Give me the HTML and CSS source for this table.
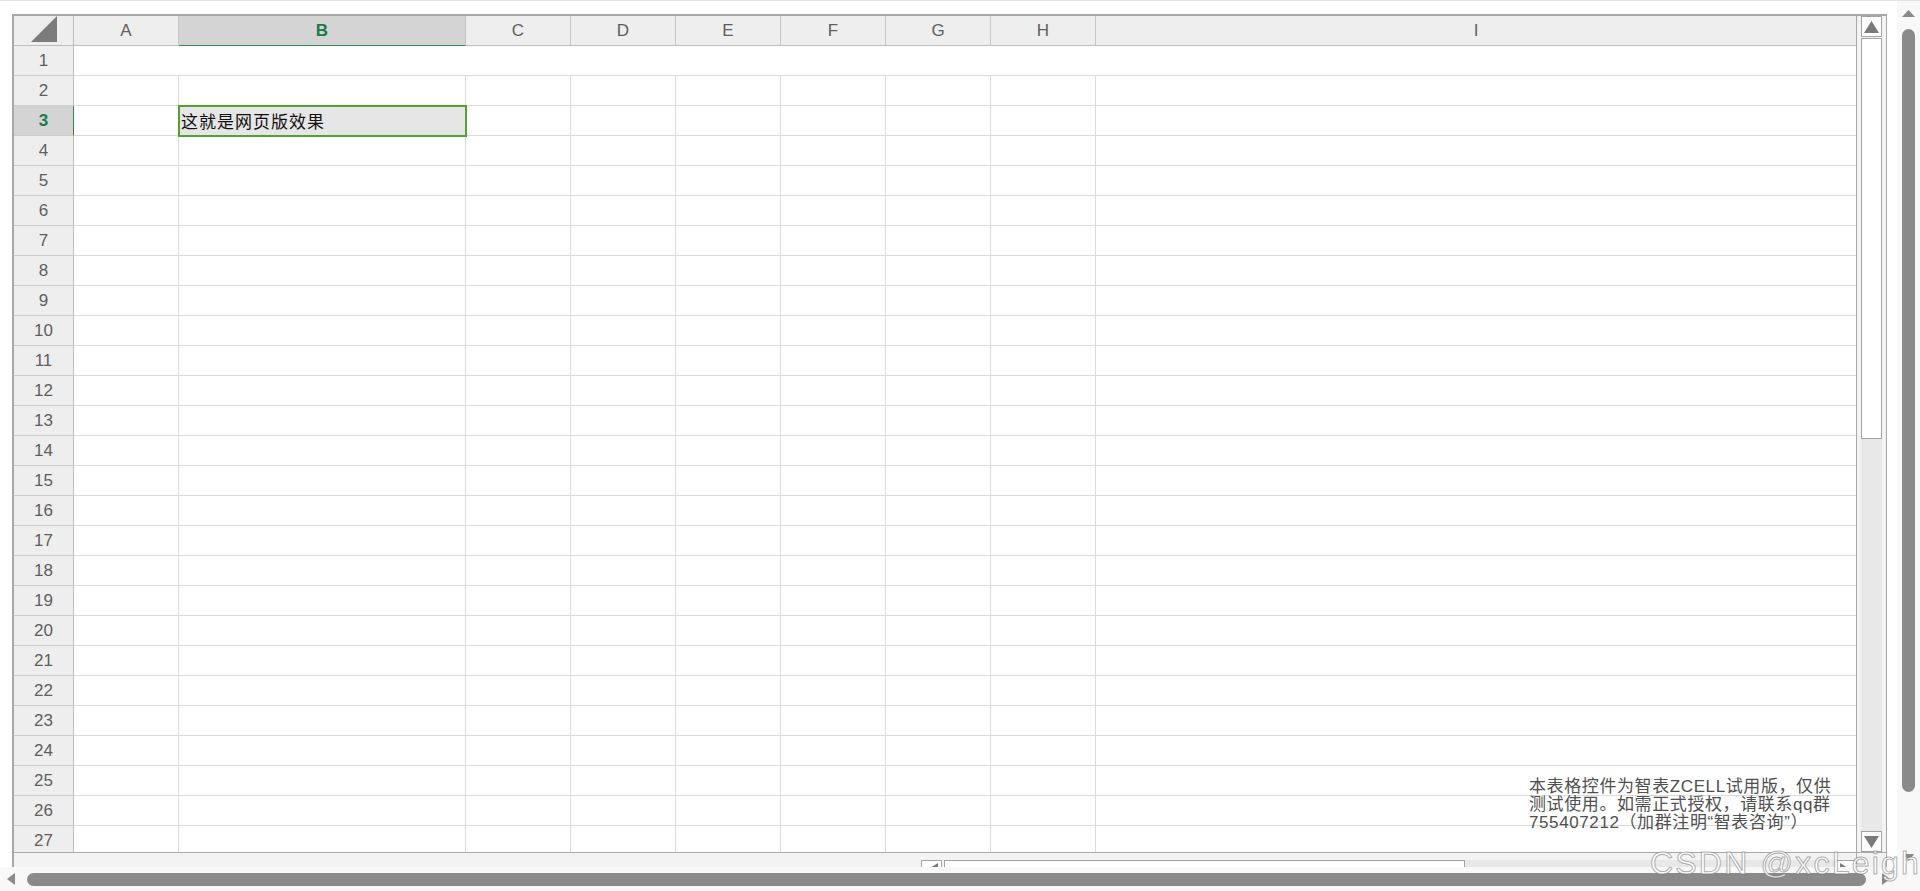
FILE: index.html
```html
<!DOCTYPE html>
<html lang="zh-CN">
<head>
<meta charset="utf-8">
<title>ZCELL</title>
<link rel="stylesheet" href="styles.css">
</head>
<body>
<div class="screen">
  <div class="doc">
    <div class="sheet">
      <div class="grid">
        <div class="r hdr">
          <div class="corner"><svg width="26" height="26" viewBox="0 0 26 26"><polygon points="0,26 26,26 26,0" fill="#7b7b7b"/></svg></div>
          <div class="ch">A</div><div class="ch on">B</div><div class="ch">C</div><div class="ch">D</div><div class="ch">E</div><div class="ch">F</div><div class="ch">G</div><div class="ch">H</div><div class="ch">I</div>
        </div>
        <div class="r"><div class="rh">1</div><div class="c span"></div></div>
        <div class="r"><div class="rh">2</div><div class="c"></div><div class="c"></div><div class="c"></div><div class="c"></div><div class="c"></div><div class="c"></div><div class="c"></div><div class="c"></div><div class="c"></div></div>
        <div class="r"><div class="rh on">3</div><div class="c"></div><div class="c sel">这就是网页版效果</div><div class="c"></div><div class="c"></div><div class="c"></div><div class="c"></div><div class="c"></div><div class="c"></div><div class="c"></div></div>
        <div class="r"><div class="rh">4</div><div class="c"></div><div class="c"></div><div class="c"></div><div class="c"></div><div class="c"></div><div class="c"></div><div class="c"></div><div class="c"></div><div class="c"></div></div>
        <div class="r"><div class="rh">5</div><div class="c"></div><div class="c"></div><div class="c"></div><div class="c"></div><div class="c"></div><div class="c"></div><div class="c"></div><div class="c"></div><div class="c"></div></div>
        <div class="r"><div class="rh">6</div><div class="c"></div><div class="c"></div><div class="c"></div><div class="c"></div><div class="c"></div><div class="c"></div><div class="c"></div><div class="c"></div><div class="c"></div></div>
        <div class="r"><div class="rh">7</div><div class="c"></div><div class="c"></div><div class="c"></div><div class="c"></div><div class="c"></div><div class="c"></div><div class="c"></div><div class="c"></div><div class="c"></div></div>
        <div class="r"><div class="rh">8</div><div class="c"></div><div class="c"></div><div class="c"></div><div class="c"></div><div class="c"></div><div class="c"></div><div class="c"></div><div class="c"></div><div class="c"></div></div>
        <div class="r"><div class="rh">9</div><div class="c"></div><div class="c"></div><div class="c"></div><div class="c"></div><div class="c"></div><div class="c"></div><div class="c"></div><div class="c"></div><div class="c"></div></div>
        <div class="r"><div class="rh">10</div><div class="c"></div><div class="c"></div><div class="c"></div><div class="c"></div><div class="c"></div><div class="c"></div><div class="c"></div><div class="c"></div><div class="c"></div></div>
        <div class="r"><div class="rh">11</div><div class="c"></div><div class="c"></div><div class="c"></div><div class="c"></div><div class="c"></div><div class="c"></div><div class="c"></div><div class="c"></div><div class="c"></div></div>
        <div class="r"><div class="rh">12</div><div class="c"></div><div class="c"></div><div class="c"></div><div class="c"></div><div class="c"></div><div class="c"></div><div class="c"></div><div class="c"></div><div class="c"></div></div>
        <div class="r"><div class="rh">13</div><div class="c"></div><div class="c"></div><div class="c"></div><div class="c"></div><div class="c"></div><div class="c"></div><div class="c"></div><div class="c"></div><div class="c"></div></div>
        <div class="r"><div class="rh">14</div><div class="c"></div><div class="c"></div><div class="c"></div><div class="c"></div><div class="c"></div><div class="c"></div><div class="c"></div><div class="c"></div><div class="c"></div></div>
        <div class="r"><div class="rh">15</div><div class="c"></div><div class="c"></div><div class="c"></div><div class="c"></div><div class="c"></div><div class="c"></div><div class="c"></div><div class="c"></div><div class="c"></div></div>
        <div class="r"><div class="rh">16</div><div class="c"></div><div class="c"></div><div class="c"></div><div class="c"></div><div class="c"></div><div class="c"></div><div class="c"></div><div class="c"></div><div class="c"></div></div>
        <div class="r"><div class="rh">17</div><div class="c"></div><div class="c"></div><div class="c"></div><div class="c"></div><div class="c"></div><div class="c"></div><div class="c"></div><div class="c"></div><div class="c"></div></div>
        <div class="r"><div class="rh">18</div><div class="c"></div><div class="c"></div><div class="c"></div><div class="c"></div><div class="c"></div><div class="c"></div><div class="c"></div><div class="c"></div><div class="c"></div></div>
        <div class="r"><div class="rh">19</div><div class="c"></div><div class="c"></div><div class="c"></div><div class="c"></div><div class="c"></div><div class="c"></div><div class="c"></div><div class="c"></div><div class="c"></div></div>
        <div class="r"><div class="rh">20</div><div class="c"></div><div class="c"></div><div class="c"></div><div class="c"></div><div class="c"></div><div class="c"></div><div class="c"></div><div class="c"></div><div class="c"></div></div>
        <div class="r"><div class="rh">21</div><div class="c"></div><div class="c"></div><div class="c"></div><div class="c"></div><div class="c"></div><div class="c"></div><div class="c"></div><div class="c"></div><div class="c"></div></div>
        <div class="r"><div class="rh">22</div><div class="c"></div><div class="c"></div><div class="c"></div><div class="c"></div><div class="c"></div><div class="c"></div><div class="c"></div><div class="c"></div><div class="c"></div></div>
        <div class="r"><div class="rh">23</div><div class="c"></div><div class="c"></div><div class="c"></div><div class="c"></div><div class="c"></div><div class="c"></div><div class="c"></div><div class="c"></div><div class="c"></div></div>
        <div class="r"><div class="rh">24</div><div class="c"></div><div class="c"></div><div class="c"></div><div class="c"></div><div class="c"></div><div class="c"></div><div class="c"></div><div class="c"></div><div class="c"></div></div>
        <div class="r"><div class="rh">25</div><div class="c"></div><div class="c"></div><div class="c"></div><div class="c"></div><div class="c"></div><div class="c"></div><div class="c"></div><div class="c"></div><div class="c"></div></div>
        <div class="r"><div class="rh">26</div><div class="c"></div><div class="c"></div><div class="c"></div><div class="c"></div><div class="c"></div><div class="c"></div><div class="c"></div><div class="c"></div><div class="c"></div></div>
        <div class="r"><div class="rh">27</div><div class="c"></div><div class="c"></div><div class="c"></div><div class="c"></div><div class="c"></div><div class="c"></div><div class="c"></div><div class="c"></div><div class="c"></div></div>
        <div class="notice">本表格控件为智表ZCELL试用版，仅供<br>测试使用。如需正式授权，请联系qq群<br>755407212（加群注明“智表咨询”）</div>
      </div>
      <div class="svs">
        <div class="sbtn"><svg width="15" height="12" viewBox="0 0 15 12"><polygon points="7.5,0 15,12 0,12" fill="#7a7a7a"/></svg></div>
        <div class="vthumb"></div>
        <div class="vtrack"></div>
        <div class="sbtn"><svg width="15" height="12" viewBox="0 0 15 12"><polygon points="0,0 15,0 7.5,12" fill="#7a7a7a"/></svg></div>
      </div>
      <div class="shs">
        <div class="sbtn hb"><svg width="12" height="15" viewBox="0 0 12 15"><polygon points="0,7.5 12,0 12,15" fill="#7a7a7a"/></svg></div>
        <div class="hthumb"></div>
        <div class="htrack"></div>
        <div class="sbtn hb"><svg width="12" height="15" viewBox="0 0 12 15"><polygon points="0,0 12,7.5 0,15" fill="#7a7a7a"/></svg></div>
      </div>
      <div class="scorner"></div>
    </div>
  </div>
  <div class="vbar">
    <svg class="arr" width="13" height="7" viewBox="0 0 13 7"><polygon points="6.5,0 13,7 0,7" fill="#8a8a8a"/></svg>
    <div class="bthumb-v"></div>
    <svg class="arr down" width="10" height="7" viewBox="0 0 10 7"><polygon points="0,0 10,0 5,7" fill="#8a8a8a"/></svg>
  </div>
  <div class="hbar">
    <svg class="arr" width="8" height="12" viewBox="0 0 8 12"><polygon points="0,6 8,0 8,12" fill="#8a8a8a"/></svg>
    <div class="bthumb-h"></div>
    <svg class="arr right" width="8" height="12" viewBox="0 0 8 12"><polygon points="0,0 8,6 0,12" fill="#8a8a8a"/></svg>
  </div>
  <div class="bcorner"></div>
  <div class="csdn">CSDN @xcLeigh</div>
</div>
</body>
</html>
```
FILE: styles.css
```css
* { box-sizing: border-box; }
html, body { margin: 0; padding: 0; background: #fff; }
body { font-family: "Liberation Sans", "Noto Sans CJK SC", sans-serif; }

.screen {
  position: relative;
  width: 1920px;
  height: 891px;
  overflow: hidden;
  border-top: 1px solid #e2e2e2;
  display: grid;
  grid-template-columns: 1897px 23px;
  grid-template-rows: 866px 24px;
}

.doc { overflow: hidden; padding: 13px 0 0 12px; }

.sheet {
  width: 1875px;
  display: grid;
  grid-template-columns: 1842px 30px;
  grid-template-rows: 836px 40px;
  border: 2px solid #a8a8a8;
  border-right-width: 1px;
  border-bottom: none;
}

.grid { position: relative; display: flex; flex-direction: column; overflow: hidden; }

.r {
  display: grid;
  grid-template-columns: 60px 105px 287px repeat(6, 105px) 760px;
  height: 30px;
  flex: none;
}
.r > :last-child { border-right: none; }

.c { border-right: 1px solid #dcdcdc; border-bottom: 1px solid #dcdcdc; }
.span { grid-column: 2 / -1; }

.rh, .ch {
  background: #eeeeee;
  color: #5e5e5e;
  font-size: 17px;
  display: flex;
  align-items: center;
  justify-content: center;
}
.rh { border-right: 1px solid #bcbcbc; border-bottom: 1px solid #cbcbcb; }
.ch { border-right: 1px solid #c6c6c6; border-bottom: 1px solid #bdbdbd; }
.ch.on { background: #d4d4d4; color: #1b7a48; font-weight: bold; border-bottom-color: #2e8b4a; }
.rh.on { background: #d4d4d4; color: #1b7a48; font-weight: bold; border-right-color: #2e8b4a; }

.corner {
  background: #eeeeee;
  border-right: 1px solid #bcbcbc;
  border-bottom: 1px solid #bdbdbd;
  display: flex;
  justify-content: flex-end;
  align-items: flex-end;
  padding: 0 16px 3px 0;
}
.corner svg { display: block; }

.sel {
  position: relative;
  z-index: 1;
  background: #e6e6e6;
  outline: 2px solid #52a02f;
  outline-offset: -1px;
  display: flex;
  align-items: center;
  padding-left: 2px;
  font-family: "Noto Sans CJK SC", sans-serif;
  font-size: 17px;
  letter-spacing: 1px;
  color: #111;
  white-space: nowrap;
}

.notice {
  position: absolute;
  left: 1515px;
  top: 762px;
  font-size: 17px;
  line-height: 18px;
  letter-spacing: 0.6px;
  color: #505050;
  white-space: nowrap;
}

/* sheet vertical scrollbar */
.svs {
  border-left: 1px solid #a8a8a8;
  background: #f3f3f3;
  padding: 0 4px;
  display: flex;
  flex-direction: column;
}
.sbtn {
  height: 21px;
  flex: none;
  border: 1px solid #a3a3a3;
  background: #fff;
  display: flex;
  align-items: center;
  justify-content: center;
}
.sbtn svg { display: block; }
.vthumb { height: 401px; flex: none; margin-top: 1px; border: 1px solid #a3a3a3; background: #fff; }
.vtrack { flex: 1; background: #e8e8e8; }

/* sheet horizontal scrollbar */
.shs {
  border-top: 1px solid #a8a8a8;
  background: #f3f3f3;
  display: flex;
  align-items: flex-start;
  padding: 7px 0 0 907px;
}
.hb { width: 21px; }
.hthumb { width: 521px; height: 21px; flex: none; margin-left: 2px; border: 1px solid #a3a3a3; background: #fff; }
.htrack { flex: 1; height: 21px; background: #e8e8e8; }
.scorner { background: #f3f3f3; border-left: 1px solid #a8a8a8; border-top: 1px solid #a8a8a8; }

/* browser scrollbars */
.arr { display: block; flex: none; }
.vbar {
  background: #f8f8f8;
  display: flex;
  flex-direction: column;
  align-items: center;
  padding-top: 9px;
}
.bthumb-v { width: 13px; height: 763px; margin-top: 12px; border-radius: 7px; background: #8a8a8a; flex: none; }
.vbar .down { margin-top: auto; margin-bottom: 6px; }

.hbar {
  background: #f8f8f8;
  display: flex;
  align-items: center;
  padding-left: 7px;
}
.bthumb-h { width: 1839px; height: 13px; margin-left: 12px; border-radius: 7px; background: #8a8a8a; flex: none; }
.hbar .right { margin-left: 16px; }
.bcorner { background: #f8f8f8; }

.csdn {
  position: absolute;
  left: 1650px;
  top: 846px;
  font-family: "Liberation Sans", sans-serif;
  font-size: 32px;
  line-height: 32px;
  letter-spacing: 2.2px;
  color: rgba(255, 255, 255, 0.85);
  -webkit-text-stroke: 1px rgba(110, 110, 110, 0.55);
  white-space: nowrap;
}
```
